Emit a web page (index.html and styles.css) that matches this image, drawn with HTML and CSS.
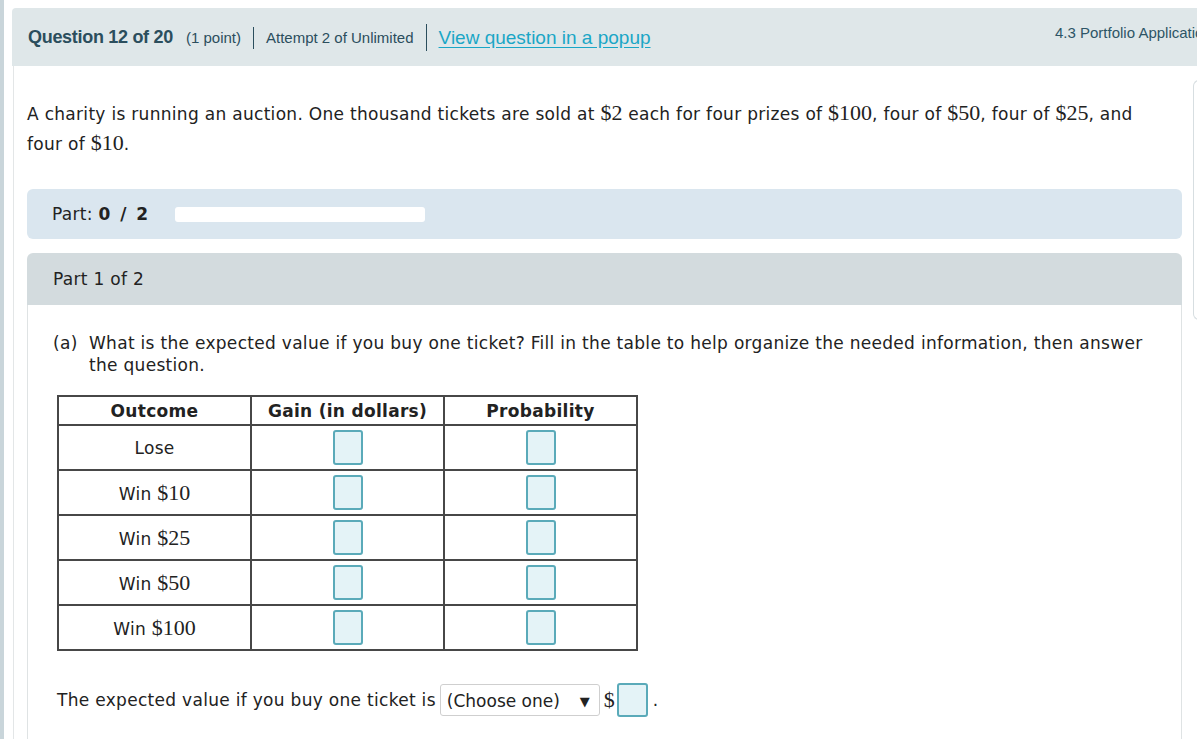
FILE: index.html
```html
<!DOCTYPE html>
<html>
<head>
<meta charset="utf-8">
<link rel="stylesheet" href="styles.css">
</head>
<body>
<div class="rail"></div>
<div class="main">
  <header class="qhead">
    <div class="qhead-left">
      <span class="qnum">Question 12 of 20</span>
      <span class="qpts">(1 point)</span>
      <span class="sep sep1"></span>
      <span class="qatt">Attempt 2 of Unlimited</span>
      <span class="sep sep2"></span>
      <a class="qpop" href="#">View question in a popup</a>
    </div>
    <div class="qhead-right">4.3 Portfolio Application</div>
  </header>
  <div class="content">
    <div class="col">
      <p class="stem">A charity is running an auction. One thousand tickets are sold at <span class="m">$2</span> each for four prizes of <span class="m">$100</span>, four of <span class="m">$50</span>, four of <span class="m">$25</span>, and four of <span class="m">$10</span>.</p>
      <div class="partbar">
        <span>Part: <b>0 / 2</b></span>
        <span class="progress"></span>
      </div>
      <section class="part">
        <div class="part-head">Part 1 of 2</div>
        <div class="part-body">
          <div class="qa"><span class="qa-label">(a)</span><span class="qa-text">What is the expected value if you buy one ticket? Fill in the table to help organize the needed information, then answer the question.</span></div>
          <table class="tbl">
            <colgroup><col class="c"><col class="c"><col class="c"></colgroup>
            <thead>
              <tr><th>Outcome</th><th>Gain (in dollars)</th><th>Probability</th></tr>
            </thead>
            <tbody>
              <tr><td>Lose</td><td><span class="box"></span></td><td><span class="box"></span></td></tr>
              <tr><td>Win <span class="m">$10</span></td><td><span class="box"></span></td><td><span class="box"></span></td></tr>
              <tr><td>Win <span class="m">$25</span></td><td><span class="box"></span></td><td><span class="box"></span></td></tr>
              <tr><td>Win <span class="m">$50</span></td><td><span class="box"></span></td><td><span class="box"></span></td></tr>
              <tr><td>Win <span class="m">$100</span></td><td><span class="box"></span></td><td><span class="box"></span></td></tr>
            </tbody>
          </table>
          <p class="answer">The expected value if you buy one ticket is <span class="select">(Choose one)<span class="arrow">▼</span></span><span class="m dollar">$</span><span class="box box-ans"></span>.</p>
        </div>
      </section>
    </div>
    <aside class="side"></aside>
  </div>
</div>
</body>
</html>
```
FILE: styles.css
```css
html, body {
  margin: 0;
  padding: 0;
  background: #fff;
}
body {
  display: flex;
  min-height: 739px;
  overflow: hidden;
  font-family: "DejaVu Sans", Verdana, sans-serif;
  font-size: 17px;
  letter-spacing: 0.3px;
  color: #222;
}
.rail {
  width: 4px;
  flex: none;
  background: #c9d5da;
}
.main {
  flex: 1;
  min-width: 0;
  padding: 8px 0 0 8px;
  overflow: hidden;
}
.qhead {
  height: 58px;
  margin-right: -120px;
  background: #dfe7e9;
  border-top-left-radius: 4px;
  display: flex;
  justify-content: space-between;
  font-family: "Liberation Sans", Arial, sans-serif;
  letter-spacing: 0;
  color: #2b4e5d;
}
.qhead-left {
  display: flex;
  align-items: center;
  padding-left: 16px;
  padding-top: 1px;
}
.qnum {
  font-weight: bold;
  font-size: 18px;
  letter-spacing: -0.3px;
}
.qpts {
  font-size: 15px;
  margin-left: 13px;
}
.sep {
  width: 1px;
  background: #2b4e5d;
  margin: 0 12px;
}
.sep1 { height: 22px; }
.sep2 { height: 27px; }
.qatt {
  font-size: 15px;
}
.qpop {
  font-size: 19px;
  color: #1aa6c6;
  text-decoration: underline;
  text-underline-offset: 3px;
}
.qhead-right {
  font-size: 15px;
  padding-top: 16px;
  width: 262px;
  white-space: nowrap;
  color: #2d5566;
}
.content {
  margin-left: 1px;
  border-left: 1px solid #e3e6e7;
  padding-left: 13px;
  display: flex;
  gap: 11px;
}
.col {
  width: 1155px;
  flex: none;
}
.side {
  flex: 1;
  margin-top: 14px;
  height: 238px;
  border: 1px solid #d7dee1;
  border-right: none;
  border-radius: 6px 0 0 6px;
  margin-right: -20px;
}
.m {
  font-family: "Liberation Serif", "Times New Roman", serif;
  font-size: 22px;
  line-height: 1;
  letter-spacing: 0;
}
.stem {
  margin: 33px 0 0;
  line-height: 30px;
  padding-right: 10px;
}
.partbar {
  margin-top: 30px;
  height: 50px;
  background: #dae6ef;
  border-radius: 6px;
  display: flex;
  align-items: center;
  padding-left: 25px;
}
.partbar b {
  letter-spacing: 1px;
  word-spacing: 2px;
}
.progress {
  width: 250px;
  height: 15px;
  background: #fff;
  border-radius: 3px;
  margin-left: 26px;
}
.part {
  margin-top: 14px;
}
.part-head {
  height: 52px;
  background: #d3dbde;
  border-radius: 6px 6px 0 0;
  display: flex;
  align-items: center;
  padding-left: 26px;
}
.part-body {
  border-left: 1px solid #dfe3e4;
  border-right: 1px solid #dfe3e4;
  padding: 27px 25px 40px;
  min-height: 400px;
}
.qa {
  display: flex;
  line-height: 22px;
}
.qa-label {
  width: 36px;
  flex: none;
}
.qa-text {
  flex: 1;
}
.tbl {
  margin: 19px 0 0 4px;
  border-collapse: collapse;
  table-layout: fixed;
  width: 580px;
}
.tbl col.c {
  width: 193px;
}
.tbl th, .tbl td {
  border: 2px solid #474747;
  text-align: center;
  padding: 0;
}
.tbl th {
  height: 27px;
  font-weight: bold;
}
.tbl td {
  height: 43px;
}
.box {
  display: inline-block;
  vertical-align: middle;
  width: 26px;
  height: 31px;
  border: 2px solid #5aaab9;
  border-radius: 3px;
  background: #e4f3f7;
}
.answer {
  margin: 32px 0 0 4px;
  display: flex;
  align-items: center;
}
.select {
  display: inline-flex;
  align-items: center;
  justify-content: space-between;
  box-sizing: border-box;
  width: 160px;
  height: 32px;
  margin-left: 4px;
  padding: 2px 9px 0 6px;
  border: 1px solid #cfcfcf;
  border-radius: 3px;
  letter-spacing: 0;
}
.arrow {
  font-size: 13px;
}
.dollar {
  margin-left: 4px;
}
.box-ans {
  width: 27px;
  height: 30px;
  margin: 0 5px 0 2px;
}
```
